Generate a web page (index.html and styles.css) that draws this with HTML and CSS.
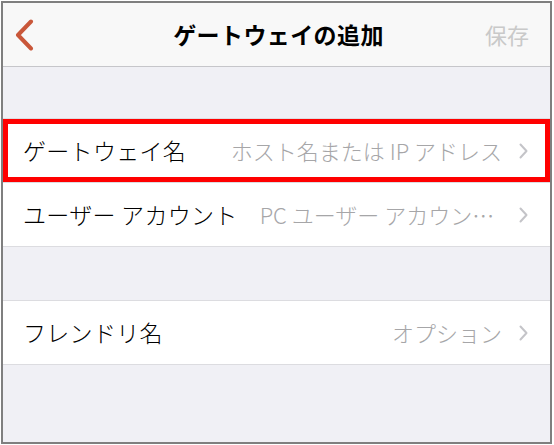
FILE: index.html
```html
<!DOCTYPE html>
<html lang="ja">
<head>
<meta charset="utf-8">
<title>ゲートウェイの追加</title>
<link rel="stylesheet" href="styles.css">
</head>
<body>
<div class="frame">
  <header class="nav">
    <svg class="back" width="20" height="32" viewBox="0 0 20 32" aria-hidden="true">
      <path d="M17 2.5 L4 16 L17 29.5" fill="none" stroke="#c9573a" stroke-width="4" stroke-linecap="round" stroke-linejoin="round"/>
    </svg>
    <h1 class="title">ゲートウェイの追加</h1>
    <span class="save">保存</span>
  </header>
  <main class="content">
    <section class="group first">
      <div class="row highlighted">
        <span class="label">ゲートウェイ名</span>
        <span class="value">ホスト名または IP アドレス</span>
        <svg class="chev" width="9" height="16" viewBox="0 0 9 16" aria-hidden="true"><path d="M1.5 1.5 L7.5 8 L1.5 14.5" fill="none" stroke="#c4c4c8" stroke-width="2" stroke-linecap="round" stroke-linejoin="round"/></svg>
      </div>
      <div class="row">
        <span class="label">ユーザー アカウント</span>
        <span class="value">PC ユーザー アカウントを毎回入力</span>
        <svg class="chev" width="9" height="16" viewBox="0 0 9 16" aria-hidden="true"><path d="M1.5 1.5 L7.5 8 L1.5 14.5" fill="none" stroke="#c4c4c8" stroke-width="2" stroke-linecap="round" stroke-linejoin="round"/></svg>
      </div>
    </section>
    <section class="group second">
      <div class="row">
        <span class="label">フレンドリ名</span>
        <span class="value">オプション</span>
        <svg class="chev" width="9" height="16" viewBox="0 0 9 16" aria-hidden="true"><path d="M1.5 1.5 L7.5 8 L1.5 14.5" fill="none" stroke="#c4c4c8" stroke-width="2" stroke-linecap="round" stroke-linejoin="round"/></svg>
      </div>
    </section>
  </main>
</div>
</body>
</html>
```
FILE: styles.css
```css
html, body {
  margin: 0;
  padding: 0;
  background: #ffffff;
}
body {
  padding: 1px 2px 1px 1px;
  font-family: "Noto Sans CJK JP", "Noto Sans", sans-serif;
}
.frame {
  width: 547px;
  height: 439px;
  border: 2px solid #7f7f7f;
  background: #f0f0f5;
  display: flex;
  flex-direction: column;
  overflow: hidden;
}
.nav {
  height: 63px;
  flex: none;
  background: #f8f8f8;
  border-bottom: 1px solid #c6c6ca;
  display: flex;
  align-items: center;
  position: relative;
}
.back {
  position: absolute;
  left: 11px;
  top: 16px;
}
.title {
  margin: 0;
  flex: 1;
  text-align: center;
  font-size: 23px;
  font-weight: 700;
  color: #000;
  letter-spacing: 0.4px;
  line-height: 1;
  padding-left: 4px;
}
.save {
  position: absolute;
  right: 21px;
  top: 18px;
  font-size: 22px;
  color: #c9c9c9;
  line-height: 1.2;
}
.content {
  flex: 1;
  display: flex;
  flex-direction: column;
}
.group {
  background: #fff;
  border-top: 1px solid #dcdce0;
  border-bottom: 1px solid #dcdce0;
}
.group.first {
  margin-top: 51px;
}
.group.second {
  margin-top: 53px;
}
.row {
  height: 63px;
  display: flex;
  align-items: center;
  padding: 0 22px 0 20px;
  position: relative;
}
.row + .row {
  border-top: 1px solid #dcdce0;
}
.row.highlighted::after {
  content: "";
  position: absolute;
  left: 0;
  right: 0;
  top: 0;
  bottom: 0;
  border: 5px solid #ff0000;
}
.label {
  flex: none;
  font-size: 23px;
  font-weight: 300;
  letter-spacing: 0.3px;
  color: #000;
  white-space: nowrap;
  line-height: 1.4;
}
.value {
  flex: 1;
  min-width: 0;
  margin-left: 22px;
  text-align: right;
  font-size: 22px;
  font-weight: 300;
  color: #a6a6a8;
  white-space: nowrap;
  overflow: hidden;
  text-overflow: ellipsis;
  line-height: 1.5;
}
.chev {
  flex: none;
  margin-left: 17px;
}
```
